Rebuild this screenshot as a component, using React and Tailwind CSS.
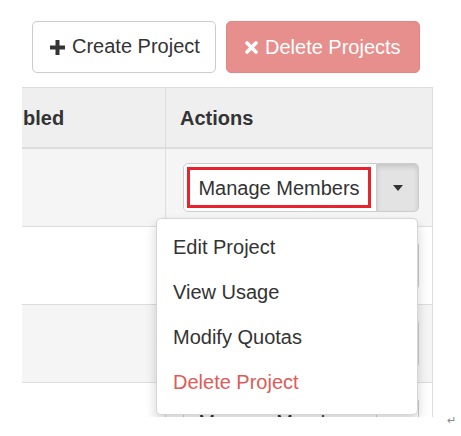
import React from 'react';

const PlusIcon = () => (
  <svg width="15" height="15" viewBox="0 0 15 15" className="shrink-0">
    <path d="M5.5 0h4v5.5H15v4H9.5V15h-4V9.5H0v-4h5.5z" fill="#333" />
  </svg>
);

const RemoveIcon = () => (
  <svg width="13" height="13" viewBox="0 0 13 13" className="shrink-0">
    <path d="M2 2l9 9M11 2l-9 9" stroke="#fff" strokeWidth="3.6" strokeLinecap="round" />
  </svg>
);

const Caret = () => (
  <span className="w-0 h-0 border-l-[5px] border-r-[5px] border-t-[6px] border-l-transparent border-r-transparent border-t-[#333]" />
);

const ActionButton = ({ active }) => (
  <div className="flex h-[49px]">
    <div className="w-[194px] bg-white border border-[#ccc] rounded-l-[5px] pl-[3px] pr-[5px] py-[3px] flex">
      <span
        className={
          'flex-1 flex items-center justify-center text-[20px] text-[#333] ' +
          (active ? 'border-[3px] border-[#e8232b]' : '')
        }
      >
        Manage Members
      </span>
    </div>
    <div
      className={
        'w-[42px] border border-l-0 border-[#ccc] rounded-r-[5px] flex items-center justify-center ' +
        (active ? 'bg-[#e3e3e3] shadow-[inset_0_3px_5px_rgba(0,0,0,0.125)]' : 'bg-white')
      }
    >
      <Caret />
    </div>
  </div>
);

const rows = [true, false, false, false];

const menuItems = [
  { label: 'Edit Project' },
  { label: 'View Usage' },
  { label: 'Modify Quotas' },
  { label: 'Delete Project', danger: true },
];

export default function App() {
  return (
    <div
      className="w-[461px] h-[436px] bg-white overflow-hidden text-[#333]"
      style={{ fontFamily: '"Liberation Sans", Arial, sans-serif' }}
    >
      <div className="flex gap-[10px] pl-[32px] pt-[21px]">
        <button className="w-[184px] h-[52px] bg-white border border-[#ccc] rounded-[5px] flex items-center pl-[17px] gap-[7px] text-[20px] text-[#333]">
          <PlusIcon />
          <span className="-mt-[3px]">Create Project</span>
        </button>
        <button className="w-[194px] h-[52px] bg-[#e68f8d] border border-[#e48784] rounded-[5px] flex items-center pl-[18px] gap-[7px] text-[20px] text-white">
          <RemoveIcon />
          <span>Delete Projects</span>
        </button>
      </div>

      <div className="flex items-end mt-[14px]">
        <div className="relative ml-[22px] w-[411px] h-[330px] overflow-hidden border-t border-r border-[#ddd]">
          <div className="grid grid-cols-[143px_1fr] h-[61px] bg-[#efefef] border-b-2 border-[#ddd]">
            <div className="flex items-center pl-[1px] text-[20px] font-bold">bled</div>
            <div className="flex items-center pl-[14px] border-l border-[#ddd] text-[20px] font-bold">
              Actions
            </div>
          </div>
          {rows.map((active, i) => (
            <div
              key={i}
              className={
                'grid grid-cols-[143px_1fr] h-[78px] border-b border-[#ddd] ' +
                (i % 2 === 0 ? 'bg-[#f5f5f5]' : 'bg-white')
              }
            >
              <div />
              <div className="flex items-center pl-[17px] border-l border-[#ddd]">
                <ActionButton active={active} />
              </div>
            </div>
          ))}

          <div className="absolute left-[134px] top-[130px] w-[262px] h-[197px] bg-white border border-[#d5d5d5] rounded-[5px] shadow-[0_6px_12px_rgba(0,0,0,0.175)] pt-[5px]">
            {menuItems.map((item) => (
              <div
                key={item.label}
                className={
                  'h-[45px] flex items-center pl-[16px] text-[20px] ' +
                  (item.danger ? 'text-[#de5b58]' : 'text-[#333]')
                }
              >
                {item.label}
              </div>
            ))}
          </div>
        </div>
        <span className="ml-[14px] mb-[-9px] text-[11px] leading-none text-[#888]">↵</span>
      </div>
    </div>
  );
}
